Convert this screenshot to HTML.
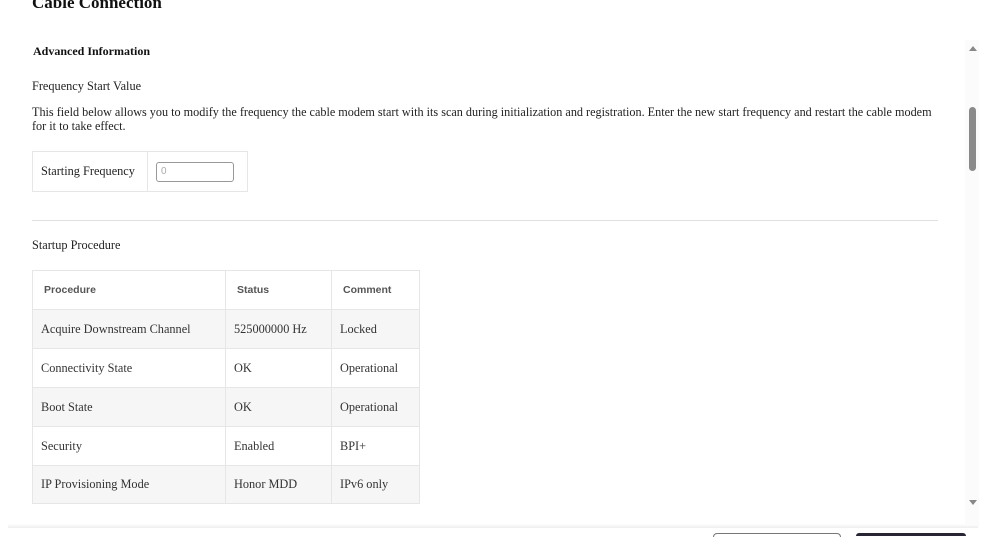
<!DOCTYPE html>
<html><head><meta charset="utf-8"><style>
html,body{margin:0;padding:0;width:998px;height:536px;overflow:hidden;background:#fff;font-family:"Liberation Serif",serif;color:#222;}
.a{position:absolute;white-space:nowrap;}
table{position:absolute;left:32px;top:270px;border-collapse:collapse;}
td{border:1px solid #e6e6e6;height:38px;padding:0 0 0 8px;font-size:12.3px;color:#333;box-sizing:border-box;}
tr.h td{font-family:"Liberation Sans",sans-serif;font-weight:bold;font-size:10.5px;color:#555;padding-left:11px;}
tr.g td{background:#f6f6f6;}
</style></head><body>
<div class="a" style="left:32px;top:-7px;font-size:17px;font-weight:bold;color:#111;">Cable Connection</div>
<div class="a" style="left:33px;top:44px;font-size:12px;font-weight:bold;color:#111;">Advanced Information</div>
<div class="a" style="left:32px;top:79px;font-size:12.3px;">Frequency Start Value</div>
<div class="a" style="left:32px;top:105px;font-size:12.2px;line-height:14px;white-space:normal;width:905px;">This field below allows you to modify the frequency the cable modem start with its scan during initialization and registration. Enter the new start frequency and restart the cable modem for it to take effect.</div>
<div class="a" style="left:32px;top:151px;width:214px;height:39px;border:1px solid #e6e6e6;"></div>
<div class="a" style="left:147px;top:151px;width:1px;height:41px;background:#e6e6e6;"></div>
<div class="a" style="left:41px;top:164px;font-size:12.3px;">Starting Frequency</div>
<div class="a" style="left:156px;top:162px;width:72px;height:18px;border:1px solid #999;border-radius:3px;font-family:'Liberation Sans',sans-serif;font-size:10px;color:#aaa;line-height:18px;padding-left:4px;">0</div>
<div class="a" style="left:32px;top:220px;width:906px;height:1px;background:#e0e0e0;"></div>
<div class="a" style="left:32px;top:238px;font-size:12.3px;">Startup Procedure</div>
<table>
<tr class="h"><td style="width:193px;height:39px">Procedure</td><td style="width:106px">Status</td><td style="width:88px">Comment</td></tr>
<tr class="g"><td style="height:39px">Acquire Downstream Channel</td><td>525000000 Hz</td><td>Locked</td></tr>
<tr><td style="height:39px">Connectivity State</td><td>OK</td><td>Operational</td></tr>
<tr class="g"><td style="height:39px">Boot State</td><td>OK</td><td>Operational</td></tr>
<tr><td style="height:39px">Security</td><td>Enabled</td><td>BPI+</td></tr>
<tr class="g"><td style="height:38px">IP Provisioning Mode</td><td>Honor MDD</td><td>IPv6 only</td></tr>
</table>
<div class="a" style="left:965px;top:40px;width:14px;height:487px;background:#fbfbfb;"></div>
<div class="a" style="left:969px;top:46px;width:0;height:0;border-left:4px solid transparent;border-right:4px solid transparent;border-bottom:5px solid #888;"></div>
<div class="a" style="left:969px;top:500px;width:0;height:0;border-left:4px solid transparent;border-right:4px solid transparent;border-top:5px solid #888;"></div>
<div class="a" style="left:969px;top:107px;width:7px;height:64px;background:#8a8a8a;border-radius:4px;"></div>
<div class="a" style="left:8px;top:524px;width:970px;height:4px;background:linear-gradient(#fff,#eee);"></div>
<div class="a" style="left:713px;top:533px;width:126px;height:3px;border:1px solid #777;border-bottom:none;border-radius:4px 4px 0 0;"></div>
<div class="a" style="left:856px;top:533px;width:110px;height:3px;background:#2a2535;border-radius:4px 4px 0 0;"></div>
</body></html>
